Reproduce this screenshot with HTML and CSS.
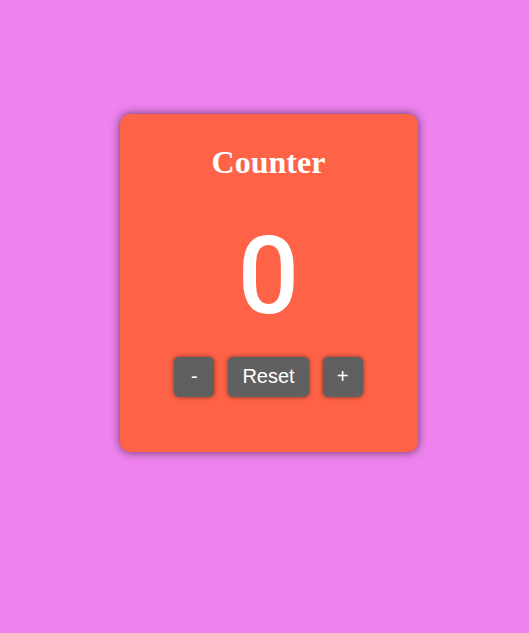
FILE: index.html
```html
<!DOCTYPE html>
<html lang="en">
<head>
<meta charset="utf-8">
<title>Counter</title>
<link rel="stylesheet" href="styles.css">
</head>
<body>
<main class="card">
  <h1 class="title">Counter</h1>
  <output class="value">0</output>
  <div class="actions">
    <button class="button" type="button">-</button>
    <button class="button" type="button">Reset</button>
    <button class="button" type="button">+</button>
  </div>
</main>
</body>
</html>
```
FILE: styles.css
```css
* {
  box-sizing: border-box;
}

body {
  margin: 0;
  padding: 114px 16px 32px 24px;
  min-height: 100vh;
  background: violet;
}

.card {
  max-width: 298px;
  margin: 0 auto;
  padding: 30px 32px 55px;
  border-radius: 10px;
  background: tomato;
  box-shadow: 0 0 10px rgba(0, 0, 0, 0.6);
  color: white;
  text-align: center;
}

.title {
  margin: 0;
  font: bold 32px/36px "Liberation Serif", serif;
}

.value {
  display: block;
  margin-top: 36px;
  font: 500 108px/120px Roboto, sans-serif;
}

.actions {
  display: flex;
  justify-content: center;
  gap: 14px;
  margin-top: 21px;
}

.button {
  min-width: 40px;
  height: 40px;
  padding: 0 14px 2px;
  border: 0;
  border-radius: 5px;
  background: #606060;
  box-shadow: 0 0 5px rgba(0, 0, 0, 0.5);
  color: white;
  font: 20px "Liberation Sans", sans-serif;
}
```
